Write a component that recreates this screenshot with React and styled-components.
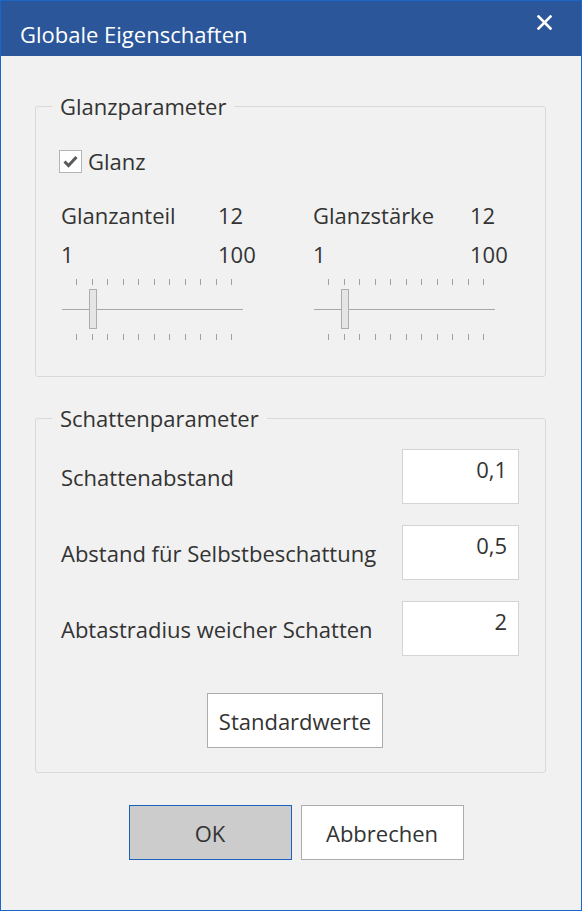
import styled, { createGlobalStyle } from "styled-components";

const Global = createGlobalStyle`
  html, body { margin: 0; padding: 0; background: #f1f1f1; }
  body { font-family: "Open Sans", "Noto Sans", sans-serif; }
`;

const Window = styled.div`
  width: 582px;
  height: 911px;
  box-sizing: border-box;
  border: 1px solid #1a66c9;
  background: #f1f1f1;
  display: flex;
  flex-direction: column;
  color: #333;
  font-size: 22px;
  line-height: 30px;
`;

const TitleBar = styled.div`
  height: 55px;
  background: #2b579a;
  display: flex;
  align-items: flex-start;
  padding-left: 19px;
  color: #fff;
`;

const Title = styled.div`
  padding-top: 18px;
`;

const Close = styled.button`
  margin-left: auto;
  margin-right: 29px;
  margin-top: 14px;
  width: 15px;
  height: 15px;
  padding: 0;
  border: none;
  background: none;
  display: flex;
`;

const Body = styled.div`
  padding: 35px 35px 0 34px;
  display: flex;
  flex-direction: column;
`;

const Group = styled.fieldset`
  margin: ${p => p.$top || 0}px 0 0;
  padding: 0;
  border: 1px solid #d9d9d9;
  border-radius: 3px;
  min-width: 0;
`;

const Legend = styled.legend`
  margin-left: 16px;
  padding: 0 8px;
  line-height: 30px;
`;

const GlanzContent = styled.div`
  padding: 25px 0 35px 25px;
  display: flex;
  flex-direction: column;
`;

const CheckRow = styled.label`
  display: flex;
  align-items: center;
  gap: 6px;
  margin-left: -2px;
  height: 30px;
`;

const CheckBox = styled.span`
  width: 23px;
  height: 23px;
  box-sizing: border-box;
  border: 1px solid #b4b4b4;
  background: #fff;
  display: flex;
  align-items: center;
  justify-content: center;
`;

const SliderColumns = styled.div`
  display: flex;
  gap: 70px;
  margin-top: 24px;
`;

const SliderColumn = styled.div`
  width: 182px;
  display: flex;
  flex-direction: column;
`;

const PairRow = styled.div`
  display: grid;
  grid-template-columns: 157px auto;
  white-space: nowrap;
  margin-top: ${p => p.$top || 0}px;
`;

const SliderSvg = styled.svg`
  display: block;
  margin-top: 10px;
  margin-left: 1px;
`;

const ShadowContent = styled.div`
  padding: 16px 26px 24px 25px;
  display: flex;
  flex-direction: column;
  gap: 21px;
`;

const FieldRow = styled.div`
  display: flex;
  align-items: center;
  justify-content: space-between;
  height: 55px;
  white-space: nowrap;
`;

const NumberBox = styled.div`
  width: 117px;
  height: 55px;
  flex-shrink: 0;
  box-sizing: border-box;
  border: 1px solid #d4d4d4;
  background: #fff;
  text-align: right;
  padding: 4px 11px 0 0;
`;

const Button = styled.button`
  font: inherit;
  color: #333;
  height: 55px;
  width: ${p => p.$w}px;
  box-sizing: border-box;
  border: 1px solid ${p => (p.$primary ? "#1b62bd" : "#adadad")};
  background: ${p => (p.$primary ? "#cccccc" : "#fff")};
  padding: 0;
`;

const CenterRow = styled.div`
  display: flex;
  justify-content: center;
  padding-left: ${p => p.$shift || 0}px;
  margin-top: ${p => p.$top || 0}px;
  gap: 9px;
`;

function Slider({ value, min = 1, max = 100 }) {
  const ticks = Array.from({ length: 11 }, (_, i) => 14 + i * 15.5);
  const x = 14 + ((value - min) / (max - min)) * 155;
  return (
    <SliderSvg width="182" height="62" viewBox="0 0 182 62">
      {ticks.map(t => (
        <g key={t} stroke="#a0a0a0" strokeWidth="1">
          <line x1={Math.round(t) + 0.5} y1="0" x2={Math.round(t) + 0.5} y2="6" />
          <line x1={Math.round(t) + 0.5} y1="55" x2={Math.round(t) + 0.5} y2="61" />
        </g>
      ))}
      <line x1="0" y1="30.5" x2="181" y2="30.5" stroke="#a8a8a8" strokeWidth="1" />
      <rect x={Math.round(x - 4) + 0.5} y="10.5" width="7" height="39" fill="#e5e5e5" stroke="#adadad" />
    </SliderSvg>
  );
}

function SliderBlock({ label, value }) {
  return (
    <SliderColumn>
      <PairRow>
        <span>{label}</span>
        <span>{value}</span>
      </PairRow>
      <PairRow $top={9}>
        <span>1</span>
        <span>100</span>
      </PairRow>
      <Slider value={value} />
    </SliderColumn>
  );
}

const fields = [
  { label: "Schattenabstand", value: "0,1" },
  { label: "Abstand für Selbstbeschattung", value: "0,5" },
  { label: "Abtastradius weicher Schatten", value: "2" },
];

export default function App() {
  return (
    <>
      <Global />
      <Window>
        <TitleBar>
          <Title>Globale Eigenschaften</Title>
          <Close aria-label="Schließen">
            <svg width="15" height="15" viewBox="0 0 15 15">
              <path d="M1.5 1.5L13.5 13.5M13.5 1.5L1.5 13.5" stroke="#fff" strokeWidth="2.6" strokeLinecap="square" />
            </svg>
          </Close>
        </TitleBar>
        <Body>
          <Group>
            <Legend>Glanzparameter</Legend>
            <GlanzContent>
              <CheckRow>
                <CheckBox>
                  <svg width="17" height="17" viewBox="0 0 17 17">
                    <path d="M2.5 8.5L6.5 12.5L14.5 4" fill="none" stroke="#5a5a5a" strokeWidth="3" />
                  </svg>
                </CheckBox>
                Glanz
              </CheckRow>
              <SliderColumns>
                <SliderBlock label="Glanzanteil" value={12} />
                <SliderBlock label="Glanzstärke" value={12} />
              </SliderColumns>
            </GlanzContent>
          </Group>
          <Group $top={26}>
            <Legend>Schattenparameter</Legend>
            <ShadowContent>
              {fields.map(f => (
                <FieldRow key={f.label}>
                  <span>{f.label}</span>
                  <NumberBox>{f.value}</NumberBox>
                </FieldRow>
              ))}
              <CenterRow $shift={10} $top={16}>
                <Button $w={176}>Standardwerte</Button>
              </CenterRow>
            </ShadowContent>
          </Group>
          <CenterRow $shift={11} $top={32}>
            <Button $w={163} $primary>OK</Button>
            <Button $w={163}>Abbrechen</Button>
          </CenterRow>
        </Body>
      </Window>
    </>
  );
}
